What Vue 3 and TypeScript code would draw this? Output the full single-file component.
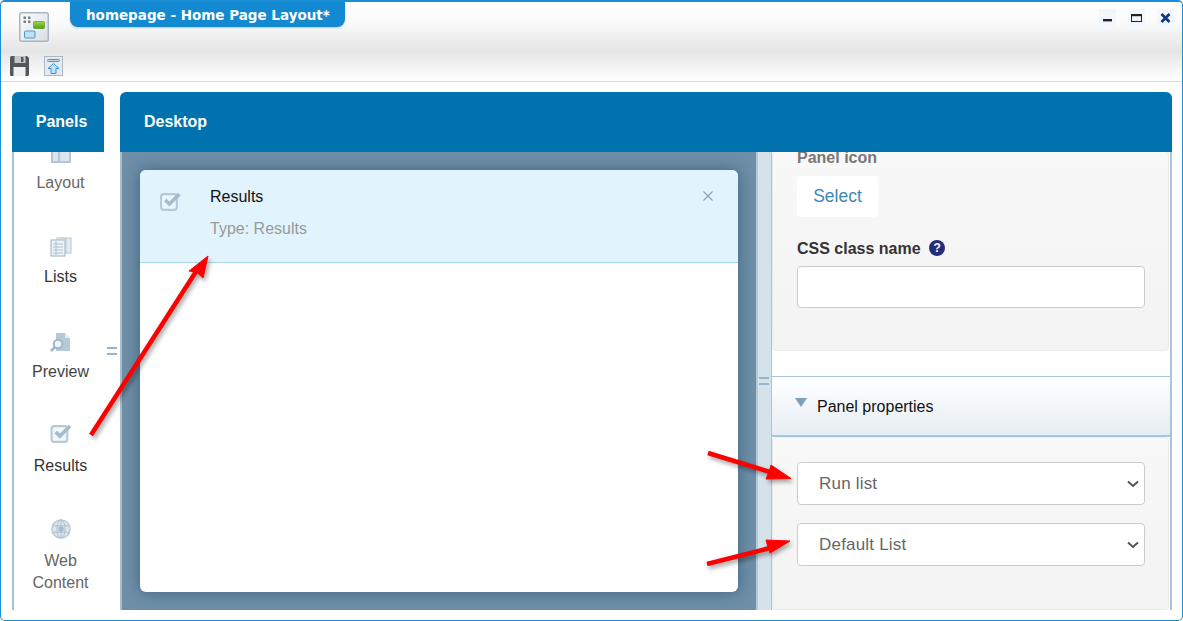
<script setup lang="ts">
interface Item { label: string[]; icon: string; tone: string }
const items: Item[] = [
  { label: ['Layout'], icon: 'layout', tone: 'soft' },
  { label: ['Lists'], icon: 'lists', tone: 'dark' },
  { label: ['Preview'], icon: 'preview', tone: 'mid' },
  { label: ['Results'], icon: 'results', tone: 'dark' },
  { label: ['Web', 'Content'], icon: 'web', tone: 'soft' },
]
</script>

<template>
  <div class="window">
    <header class="titlebar">
      <div class="top-row">
        <svg class="app-icon" width="30" height="30" viewBox="0 0 30 30">
          <defs>
            <linearGradient id="appbg" x1="0" y1="0" x2="1" y2="1">
              <stop offset="0" stop-color="#fbfcfd" />
              <stop offset="1" stop-color="#d9dee3" />
            </linearGradient>
            <linearGradient id="appgreen" x1="0" y1="0" x2="0" y2="1">
              <stop offset="0" stop-color="#a6d84a" />
              <stop offset="1" stop-color="#4f9f16" />
            </linearGradient>
          </defs>
          <rect x=".75" y=".75" width="28.5" height="28.5" rx="2" fill="url(#appbg)" stroke="#a9b5c0" stroke-width="1.500" />
          <g fill="#7d7d7d">
            <rect x="4.500" y="4.500" width="2.500" height="2.500" /><rect x="9" y="4.500" width="2.500" height="2.500" />
            <rect x="4.500" y="8.500" width="2.500" height="2.500" /><rect x="9" y="8.500" width="2.500" height="2.500" />
          </g>
          <rect x="14.500" y="9.500" width="11" height="7" rx="1" fill="url(#appgreen)" stroke="#5c9a26" stroke-width=".7" />
          <rect x="5.500" y="19" width="10.500" height="7" rx="1" fill="#bfe0f5" stroke="#4f9ad0" />
        </svg>
        <div class="title-tab">homepage - Home Page Layout*</div>
        <div class="controls">
          <span class="ctl"><svg width="17" height="18" viewBox="0 0 17 18"><rect x="4" y="10" width="9" height="2.400" fill="#222" /></svg></span>
          <span class="ctl"><svg width="17" height="18" viewBox="0 0 17 18"><rect x="3.500" y="5.500" width="10" height="7" fill="#f4f4f4" stroke="#222" /><rect x="3" y="5" width="11" height="2.200" fill="#222" /></svg></span>
          <span class="ctl"><svg width="17" height="18" viewBox="0 0 17 18"><path d="M4.500 5 12.500 13M12.500 5 4.500 13" stroke="#14397e" stroke-width="2.800" fill="none" /></svg></span>
        </div>
      </div>
      <div class="tool-row">
        <svg width="19" height="20" viewBox="0 0 19 20">
          <path d="M0 1.500Q0 0 1.500 0H17L19 2V18.500Q19 20 17.500 20H1.500Q0 20 0 18.500Z" fill="#52575c" />
          <rect x="4.500" y="0" width="11" height="7" fill="#c3c8cc" />
          <rect x="11" y="1" width="2.500" height="5" fill="#52575c" />
          <rect x="3.500" y="11" width="12" height="9" fill="#eef1f4" />
        </svg>
        <svg width="19" height="20" viewBox="0 0 19 20">
          <rect x=".5" y=".5" width="18" height="19" fill="#e4eaf0" stroke="#aeb8c2" />
          <rect x="3.500" y="3.500" width="12" height="2" rx="1" fill="#bfe3f7" stroke="#3a94d2" />
          <path d="M9.500 7.500 15 12.500H12V17.500H7V12.500H4Z" fill="#bfe3f7" stroke="#3a94d2" />
        </svg>
      </div>
    </header>

    <main class="main">
      <section class="panels">
        <h2 class="bar bar-panels">Panels</h2>
        <div class="panel-list">
          <div class="panel-scroll">
            <div v-for="item in items" :key="item.icon" class="panel-item" :class="item.tone">
              <svg v-if="item.icon === 'layout'" width="20" height="20" viewBox="0 0 20 20">
                <path d="M1 1H19V19H1Z" fill="#dbe5ec" stroke="#b5c7d4" stroke-width="2" />
                <path d="M8 2V18M8 8H18" stroke="#b5c7d4" stroke-width="2" />
              </svg>
              <svg v-else-if="item.icon === 'lists'" width="22" height="20" viewBox="0 0 22 20">
                <rect x="12" y="1" width="9" height="15" fill="#e4ecf1" stroke="#b5c7d4" />
                <rect x="7" y="1" width="9" height="15" fill="#e4ecf1" stroke="#b5c7d4" />
                <rect x="1" y="3" width="14" height="16" fill="#edf2f6" stroke="#b0c3d1" stroke-width="1.300" />
                <path d="M3 7H13M3 10H13M3 13H13M3 16H13M6 4V18" stroke="#b0c3d1" />
              </svg>
              <svg v-else-if="item.icon === 'preview'" width="21" height="20" viewBox="0 0 21 20">
                <path d="M6 1H14.500L20 6.500V19H6Z" fill="#b7c9d6" />
                <path d="M15 0.500V6H20.500Z" fill="#e4ecf1" />
                <circle cx="8" cy="12" r="4.300" fill="#eef3f6" stroke="#9fb6c6" stroke-width="2" />
                <path d="M5 15 1 19" stroke="#9fb6c6" stroke-width="2.500" />
              </svg>
              <svg v-else-if="item.icon === 'results'" class="lift" width="22" height="20" viewBox="0 0 20 19">
                <rect x="1" y="2" width="15" height="15" rx="2.500" fill="#f2f6f9" stroke="#b5c9d6" stroke-width="2" />
                <path d="M5 7.500 9 11.500 18.500 2" fill="none" stroke="#a4bccc" stroke-width="3.400" />
              </svg>
              <svg v-else class="lift" width="20" height="20" viewBox="0 0 22 22">
                <circle cx="11" cy="11" r="10" fill="#dbe6ee" stroke="#b5c7d4" stroke-width="1.500" />
                <ellipse cx="11" cy="11" rx="4.500" ry="10" fill="none" stroke="#a8bdcc" />
                <path d="M2 7.500H20M2 14.500H20M11 1V21" stroke="#a8bdcc" />
                <circle cx="11" cy="11" r="3" fill="#a8bdcc" />
              </svg>
              <div class="panel-label">
                <div v-for="line in item.label" :key="line">{{ line }}</div>
              </div>
            </div>
          </div>
        </div>
      </section>

      <div class="grip grip-left"><span class="grip-mark"></span></div>

      <section class="desktop">
        <h2 class="bar bar-desktop">Desktop</h2>
        <div class="desk-row">
          <div class="canvas">
            <article class="card">
              <div class="card-head">
                <svg class="card-icon" width="21" height="20" viewBox="0 0 20 19">
                  <rect x="1" y="2" width="15" height="15" rx="2.500" fill="#eaf6fc" stroke="#b5c9d6" stroke-width="2" />
                  <path d="M5 7.500 9 11.500 18.500 2" fill="none" stroke="#a4bccc" stroke-width="3.400" />
                </svg>
                <div class="card-text">
                  <div class="card-title">Results</div>
                  <div class="card-type">Type: Results</div>
                </div>
                <svg class="card-close" width="10" height="10" viewBox="0 0 10 10">
                  <path d="M.5.500 9.500 9.500M9.500.500 .5 9.500" stroke="#8aa3b5" stroke-width="1.200" fill="none" />
                </svg>
              </div>
            </article>
          </div>
          <div class="grip grip-right"><span class="grip-mark"></span></div>
          <aside class="props">
            <div class="group group-top">
              <label class="field-label faded">Panel icon</label>
              <button class="select-btn" type="button">Select</button>
              <label class="field-label second">
                CSS class name
                <span class="help">?</span>
              </label>
              <input class="text-input" type="text" />
            </div>
            <div class="accordion">
              <svg width="12" height="9" viewBox="0 0 12 9"><path d="M0 0H12L6 9Z" fill="#7f9fb8" /></svg>
              <span>Panel properties</span>
            </div>
            <div class="group group-bottom">
              <div class="select-wrap">
                <select class="dropdown"><option>Run list</option></select>
                <svg class="chev" width="12" height="8" viewBox="0 0 12 8"><path d="M1 1.500 6 6 11 1.500" fill="none" stroke="#555" stroke-width="2" /></svg>
              </div>
              <div class="select-wrap">
                <select class="dropdown"><option>Default List</option></select>
                <svg class="chev" width="12" height="8" viewBox="0 0 12 8"><path d="M1 1.500 6 6 11 1.500" fill="none" stroke="#555" stroke-width="2" /></svg>
              </div>
            </div>
          </aside>
        </div>
      </section>
    </main>

    <svg class="annotations" width="1183" height="621" viewBox="0 0 1183 621">
      <g fill="#ff0000" stroke="#ff0000">
        <path d="M91 435 197 270" stroke-width="4.600" fill="none" />
        <path d="M208 256 203 278 196.500 272 189 271Z" stroke-width="1" />
        <path d="M708 453 770 472" stroke-width="4.600" fill="none" />
        <path d="M791 478.500 766 479 769 472 771 465Z" stroke-width="1" />
        <path d="M707 564 770 548" stroke-width="4.600" fill="none" />
        <path d="M790 541 770 553 768 547 766 540Z" stroke-width="1" />
      </g>
    </svg>
  </div>
</template>

<style>
html, body { margin: 0; padding: 0; background: #fff; }
</style>

<style scoped>
.window {
  position: relative;
  box-sizing: border-box;
  width: 1183px;
  height: 621px;
  display: flex;
  flex-direction: column;
  overflow: hidden;
  background: #fff;
  border: 1px solid #1a8fd6;
  border-top-width: 2px;
  border-radius: 5px;
  font-family: "Liberation Sans", Arial, sans-serif;
  font-size: 16px;
}
.titlebar {
  box-sizing: border-box;
  height: 80px;
  flex: none;
  border-bottom: 1px solid #cfdcea;
  background: linear-gradient(#fff 0%, #fbfbfb 25%, #e5e5e5 62%, #fff 100%);
}
.top-row {
  height: 54px;
  display: flex;
  align-items: flex-start;
  padding-left: 18px;
  padding-right: 8px;
}
.app-icon { margin-top: 10px; flex: none; }
.title-tab {
  box-sizing: border-box;
  width: 275px;
  height: 25px;
  margin-left: 21px;
  padding-left: 16px;
  background: #1289d0;
  border-radius: 0 0 8px 8px;
  color: #fff;
  font-family: "DejaVu Sans", sans-serif;
  font-weight: 700;
  font-size: 13.5px;
  line-height: 26px;
  box-shadow: 0 1px 2px rgba(60, 120, 170, .35);
}
.controls {
  margin-left: auto;
  margin-top: 7px;
  display: flex;
  gap: 12px;
}
.ctl {
  display: block;
  width: 17px;
  height: 18px;
  background: #f1f7fc;
}
.ctl svg { display: block; }
.tool-row {
  display: flex;
  gap: 15px;
  padding-left: 9px;
}
.main {
  flex: 1;
  min-height: 0;
  display: flex;
  padding: 10px 10px 10px 11px;
}
.bar {
  margin: 0;
  box-sizing: border-box;
  height: 60px;
  flex: none;
  background: #0072ad;
  color: #fff;
  font-size: 16px;
  font-weight: 700;
  line-height: 60px;
  border-radius: 6px 6px 0 0;
}
.bar-panels { text-align: center; padding-left: 7px; }
.bar-desktop { padding-left: 24px; }
.panels {
  width: 92px;
  flex: none;
  display: flex;
  flex-direction: column;
}
.panel-list {
  flex: 1;
  min-height: 0;
  overflow: hidden;
  border-left: 2px solid #a9c0d3;
}
.panel-scroll { margin-top: -19.3px; padding-left: 3px; }
.panel-item {
  box-sizing: border-box;
  height: 94.6px;
  padding-top: 10px;
  display: flex;
  flex-direction: column;
  align-items: center;
}
.panel-item svg { display: block; flex: none; }
.panel-item svg.lift { margin: -2px 0 2px; }
.panel-label {
  margin-top: 9px;
  line-height: 22px;
  text-align: center;
}
.soft .panel-label { color: #666; }
.mid .panel-label { color: #444; }
.dark .panel-label { color: #333; }
.grip {
  display: flex;
  align-items: center;
  justify-content: center;
  flex: none;
}
.grip-left { width: 16px; }
.grip-mark {
  display: block;
  width: 10px;
  height: 4px;
  border-top: 2px solid #97b5ca;
  border-bottom: 2px solid #97b5ca;
}
.desktop {
  flex: 1;
  min-width: 0;
  display: flex;
  flex-direction: column;
}
.desk-row {
  flex: 1;
  min-height: 0;
  display: flex;
}
.canvas {
  box-sizing: border-box;
  width: 636px;
  flex: none;
  padding: 18px 0 0 18px;
  background: #6f8fa8;
  border-left: 2px solid #a9bccc;
  overflow: hidden;
}
.card {
  width: 598px;
  height: 422px;
  background: #fff;
  border-radius: 6px;
  overflow: hidden;
  box-shadow: 0 0 16px rgba(20, 60, 90, .55);
}
.card-head {
  box-sizing: border-box;
  height: 93px;
  display: flex;
  align-items: flex-start;
  background: #e1f4fd;
  border-bottom: 1px solid #a8d8ee;
}
.card-icon { margin: 22px 0 0 20px; flex: none; }
.card-text { margin-left: 29px; padding-top: 16px; flex: 1; }
.card-title { line-height: 22px; color: #111; }
.card-type { margin-top: 10px; line-height: 22px; color: #999; }
.card-close { margin: 21px 25px 0 0; flex: none; }
.grip-right {
  box-sizing: border-box;
  width: 15px;
  padding-right: 2px;
  background: #d6e2ea;
  border-left: 2px solid #b4cad9;
}
.props {
  flex: 1;
  min-width: 0;
  overflow: hidden;
  background: #fff;
  border-left: 1px solid #a9c5d8;
  border-right: 2px solid #a9c5d8;
}
.group {
  box-sizing: border-box;
  background: linear-gradient(#f8f8f8, #f3f3f3);
  border-radius: 4px;
  border: 1px solid #ebebeb;
  margin-right: 1px;
  padding-left: 24px;
}
.group-top {
  height: 200px;
  margin-top: -1px;
}
.field-label {
  display: block;
  font-weight: 700;
  line-height: 22px;
  color: #333;
}
.faded { color: #777; line-height: 12px; }
.second { margin-top: 21px; }
.select-btn {
  display: block;
  box-sizing: border-box;
  width: 81px;
  height: 41px;
  margin-top: 12px;
  border: 0;
  border-radius: 4px;
  background: #fff;
  color: #3f87b5;
  font: inherit;
  font-size: 17.5px;
}
.help {
  display: inline-block;
  width: 16px;
  height: 16px;
  margin-left: 4px;
  border-radius: 50%;
  background: #252c78;
  color: #fff;
  font-size: 12px;
  line-height: 16px;
  text-align: center;
  vertical-align: 2px;
}
.text-input {
  display: block;
  box-sizing: border-box;
  width: 348px;
  height: 42px;
  margin-top: 6px;
  border: 1px solid #ccc;
  border-radius: 4px;
  background: #fff;
}
.accordion {
  box-sizing: border-box;
  height: 61px;
  margin-top: 25px;
  display: flex;
  align-items: center;
  gap: 10px;
  padding: 2px 0 0 23px;
  background: linear-gradient(#fff, #e6edf4);
  border-top: 1px solid #a9c5d8;
  border-bottom: 2px solid #a9c5d8;
  color: #111;
}
.accordion svg { margin-top: -9px; }
.group-bottom {
  height: 173px;
  padding-top: 24px;
}
.select-wrap {
  position: relative;
  width: 348px;
  height: 43px;
  margin-bottom: 18px;
}
.dropdown {
  display: block;
  box-sizing: border-box;
  width: 100%;
  height: 100%;
  padding: 0 30px 0 21px;
  appearance: none;
  border: 1px solid #ccc;
  border-radius: 4px;
  background: #fff;
  color: #666;
  font: inherit;
  font-size: 17px;
  letter-spacing: .2px;
}
.chev {
  position: absolute;
  right: 6px;
  top: 18px;
  pointer-events: none;
}
.annotations {
  position: absolute;
  left: -1px;
  top: -2px;
  pointer-events: none;
  filter: drop-shadow(2px 3px 2px rgba(0, 0, 0, .35));
}
</style>
